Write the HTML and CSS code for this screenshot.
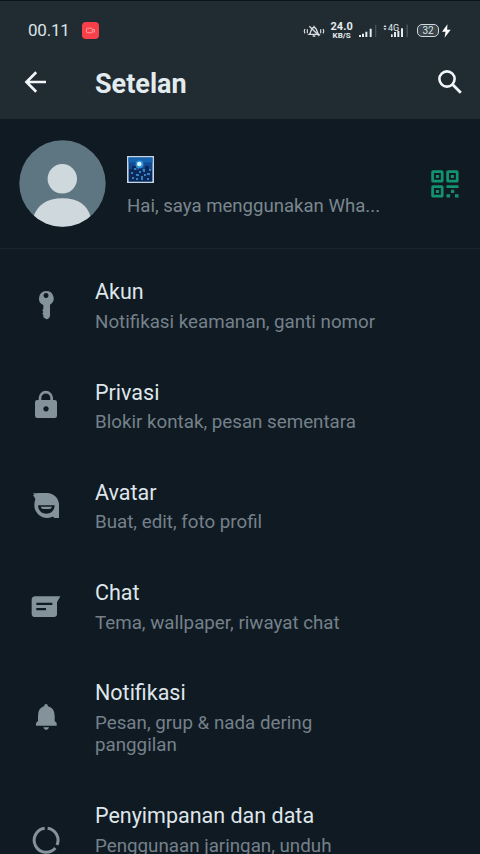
FILE: index.html
```html
<!DOCTYPE html>
<html lang="id">
<head>
<meta charset="utf-8">
<title>Setelan</title>
<link rel="stylesheet" href="styles.css">
</head>
<body>
<div class="screen">
  <header class="top">
    <div class="status">
      <span class="time">00.11</span>
      <svg class="rec" viewBox="0 0 17 17"><rect width="17" height="17" rx="4" fill="#f9404a"/><rect x="4.500" y="6.200" width="5.800" height="4.600" rx="1" fill="none" stroke="#ff9d98"/><path d="M10.500 7.500h2v2.500h-2" fill="none" stroke="#ff9d98"/></svg>
      <div class="indicators">
        <svg class="mute" viewBox="0 0 66 42" fill="none" stroke="#d5dde1" stroke-width="4"><path d="M19 31c6-4 3-20 14-21 10 1 8 17 14 21zM29 36h8M19 7l30 29M33 5v5"/><path d="M13 16v12M6 15q-4 7 0 13M53 16v12M60 15q4 7 0 13" stroke-width="3.500"/></svg>
        <div class="speed"><span>24.0</span><span class="unit">KB/S</span></div>
        <svg class="signal" viewBox="0 0 56 42"><path d="M0 33h6v6H0zM9 29h6v10H9zM19 23h6v16h-6zM32 14h6v25h-6z" fill="#e5ebee"/><path d="M48 2h4v37h-4z" fill="#44515a"/></svg>
        <svg class="signal4g" viewBox="0 0 80 42"><path d="M1 9l5-6 5 6zM1 13l5 6 5-6z" fill="#dce3e7"/><text x="15" y="20" class="net">4G</text><path d="M24 31h5v8h-5zM33 24h6v15h-6zM43 21h6v18h-6zM54 13h6v26h-6z" fill="#e5ebee"/><path d="M70 2h5v37h-5z" fill="#44515a"/></svg>
        <div class="battery">32</div>
        <svg class="bolt" viewBox="0 0 28 42"><path d="M17 0L0 23h11L8 42l19-25H16z" fill="#fff"/></svg>
      </div>
    </div>
    <div class="bar">
      <svg class="back" viewBox="0 0 24 24"><path d="M22 12H2.500M12.200 2.300L2.500 12l9.700 9.700" fill="none" stroke="#f2f6f8" stroke-width="2.700"/></svg>
      <h1>Setelan</h1>
      <svg class="search" viewBox="0 0 26 26"><circle cx="10" cy="10" r="7.600" fill="none" stroke="#f2f6f8" stroke-width="2.600"/><path d="M15.300 15.300l8.500 8.500" stroke="#f2f6f8" stroke-width="2.800"/></svg>
    </div>
  </header>

  <section class="profile">
    <svg class="avatar" viewBox="0 0 87 87"><defs><clipPath id="round"><circle cx="43.500" cy="43.500" r="43.200"/></clipPath></defs><g clip-path="url(#round)"><path d="M0 0h87v87H0z" fill="#5d7682"/><circle cx="43.300" cy="38.800" r="14.700" fill="#cfd8dd"/><path d="M14 78Q20 58.300 43.500 58.300T72 78V87H14z" fill="#cfd8dd"/></g></svg>
    <div class="who">
      <svg class="emoji" viewBox="0 0 27 27"><rect width="27" height="27" fill="#c5d5e6"/><rect x="1.500" y="1.500" width="24" height="24" fill="#124a91"/><path d="M1.500 1.500h24v5h-24z" fill="#1764ae"/><path d="M2 13h3v-3h4v4h3v-3h3v4h3v-5h4v4h3v11.500H2z" fill="#0b2856"/><circle cx="12.500" cy="8.500" r="4" fill="#328fd0"/><circle cx="12.300" cy="8" r="2.300" fill="#d9f4ff"/><path d="M4 16h2v2H4zM9 18h3v2H9zM16 13h2v3h-2zM20 17h3v2h-3zM5 21h2v2H5zM14 20h2v4h-2zM20 22h2v2h-2zM7 12h2v2H7zM12 15h2v2h-2zM9 22h2v2H9zM17 18h2v2h-2zM22 13h2v2h-2z" fill="#3480c8"/></svg>
      <p class="about">Hai, saya menggunakan Wha...</p>
    </div>
    <svg class="qr" viewBox="0 0 28 28"><g fill="none" stroke="#13926f" stroke-width="2.700"><rect x="1.600" y="1.600" width="9.600" height="9.600" rx=".5"/><rect x="16.600" y="1.600" width="9.600" height="9.600" rx=".5"/><rect x="1.600" y="16.600" width="9.600" height="9.600" rx=".5"/></g><path d="M4.900 4.900h3v3h-3zM19.900 4.900h3v3h-3zM4.900 19.900h3v3h-3zM15.500 15.300h12v2.700h-12zM20 19.800h3.200v3.200H20zM15.500 24.300h3.600v3.200h-3.600zM24 24.300h3.500v3.200H24z" fill="#13926f"/></svg>
  </section>

  <main class="list">
    <div class="item">
      <svg class="icon" viewBox="0 0 180 180"><path fill-rule="evenodd" d="M78 48a22 22 0 0 1 12 41v34q-2 9-11 10l-9-6v-7l-3-4 3-5-3-6 3-4V90A22 22 0 0 1 78 48zm0 6a7.500 7.500 0 1 0 .1 0z"/></svg>
      <div><h2>Akun</h2><p>Notifikasi keamanan, ganti nomor</p></div>
    </div>
    <div class="item">
      <svg class="icon" viewBox="0 0 180 180"><path fill-rule="evenodd" d="M56 75V69a21.500 21.500 0 0 1 43 0v6h5q7 0 7 7v40q0 7-7 7H52q-7 0-7-7V82q0-7 7-7zm8 0h27v-6a13.500 13.500 0 0 0-27 0zm14 18.500a8 8 0 1 0 .1 0z"/></svg>
      <div><h2>Privasi</h2><p>Blokir kontak, pesan sementara</p></div>
    </div>
    <div class="item">
      <svg class="icon" viewBox="0 0 180 180"><path fill-rule="evenodd" d="M39 54q8 2 16 0h26a36 36 0 0 1 36 36v39H103q-3-5-8-3-6 3-14 3a38 38 0 0 1-38-38q0-10 3-18-1-6-7-12l4-2zm15 37q2 25 25 25t25-25z"/><path d="M62 95h34q-2 7-8 7H70q-6 0-8-7z"/></svg>
      <div><h2>Avatar</h2><p>Buat, edit, foto profil</p></div>
    </div>
    <div class="item">
      <svg class="icon" viewBox="0 0 180 180"><path fill-rule="evenodd" d="M46 61h75l-10 18v35q0 9-9 9H46q-11 0-11-10V72q0-11 11-11zm3 19v7h48v-7zm0 16v7h29v-7z"/></svg>
      <div><h2>Chat</h2><p>Tema, wallpaper, riwayat chat</p></div>
    </div>
    <div class="item wrap">
      <svg class="icon" viewBox="0 0 180 180"><path d="M78 51q5 0 6 7 20 6 20 28v16l6 6v8H48v-8l6-6V86q0-22 18-28 1-7 6-7zM70 121h17q-2 8-8.500 8T70 121z"/></svg>
      <div><h2>Notifikasi</h2><p>Pesan, grup &amp; nada dering panggilan</p></div>
    </div>
    <div class="item wrap">
      <svg class="icon" viewBox="0 0 180 180"><path class="ring" d="M74 55A36 36 0 1 0 106 114M83 55A36 36 0 0 1 111 105"/></svg>
      <div><h2>Penyimpanan dan data</h2><p>Penggunaan jaringan, unduh otomatis</p></div>
    </div>
  </main>
</div>
</body>
</html>
```
FILE: styles.css
```css
* { box-sizing: border-box; }
body { margin: 0; background: #101a23; font-family: Roboto, "Liberation Sans", sans-serif; }
h1, h2, p { margin: 0; }
svg { display: block; flex: none; }
.screen { height: 854px; overflow: hidden; }
.top { height: 119px; background: #212b32; border-top: 1px solid #0b141b; }
.status { height: 59px; display: flex; align-items: center; padding-left: 28px; }
.time { width: 54px; margin-top: -1px; color: #dbe3e7; font-size: 17px; letter-spacing: -0.2px; }
.rec { width: 17px; height: 17px; }
.indicators { margin: 0 29px 0 auto; display: flex; align-items: center; }
.mute { width: 22px; height: 14px; margin-right: 6px; }
.speed { width: 22px; margin-right: 6px; display: flex; flex-direction: column; align-items: center; color: #e5ebee; font-size: 11px; line-height: 10px; font-weight: 700; }
.unit { font-size: 8px; line-height: 8px; }
.signal { width: 18.700px; height: 14px; margin-right: 6px; }
.signal4g { width: 26.700px; height: 14px; margin-right: 7px; }
.net { font-size: 27px; fill: #e5ebee; }
.battery { width: 22px; height: 13px; border: 1.500px solid #cfd8dc; border-radius: 5px; color: #dce3e7; font-size: 10px; line-height: 11px; text-align: center; background: #3a454b; margin-right: 3px; }
.bolt { width: 9px; height: 14px; }
.bar { height: 46px; display: flex; align-items: center; padding: 0 17px 0 24px; }
.back { width: 24px; height: 24px; margin-top: -2px; }
h1 { margin: 2px 0 0 47px; font-size: 27px; line-height: 46px; font-weight: 700; color: #e3ebef; }
.search { width: 26px; height: 26px; margin: -3px 0 0 auto; }
.profile { height: 130px; display: flex; align-items: center; padding: 0 21px 0 19px; border-bottom: 1px solid #1a242c; }
.avatar { width: 87px; height: 87px; }
.who { margin-left: 21px; padding-top: 5px; }
.emoji { width: 27px; height: 27px; margin-bottom: 12px; }
.about { font-size: 18.600px; line-height: 22px; color: #7b878f; white-space: nowrap; }
.qr { width: 28px; height: 28px; margin-left: auto; }
.list { padding-top: 6px; }
.item { display: flex; align-items: center; padding: 23.300px 120px 22.100px 20px; }
.item div { flex: 1; margin-left: 15px; }
.icon { width: 60px; height: 60px; margin: -12px 0 -10px; fill: #84929b; }
.ring { fill: none; stroke: #84929b; stroke-width: 9; }
.item h2 { font-size: 21.500px; line-height: 28px; font-weight: 400; color: #dfe6ea; white-space: nowrap; }
.item p { margin-top: 4.500px; font-size: 18.750px; line-height: 22.400px; color: #75818a; white-space: nowrap; }
.wrap p { white-space: normal; }
```
